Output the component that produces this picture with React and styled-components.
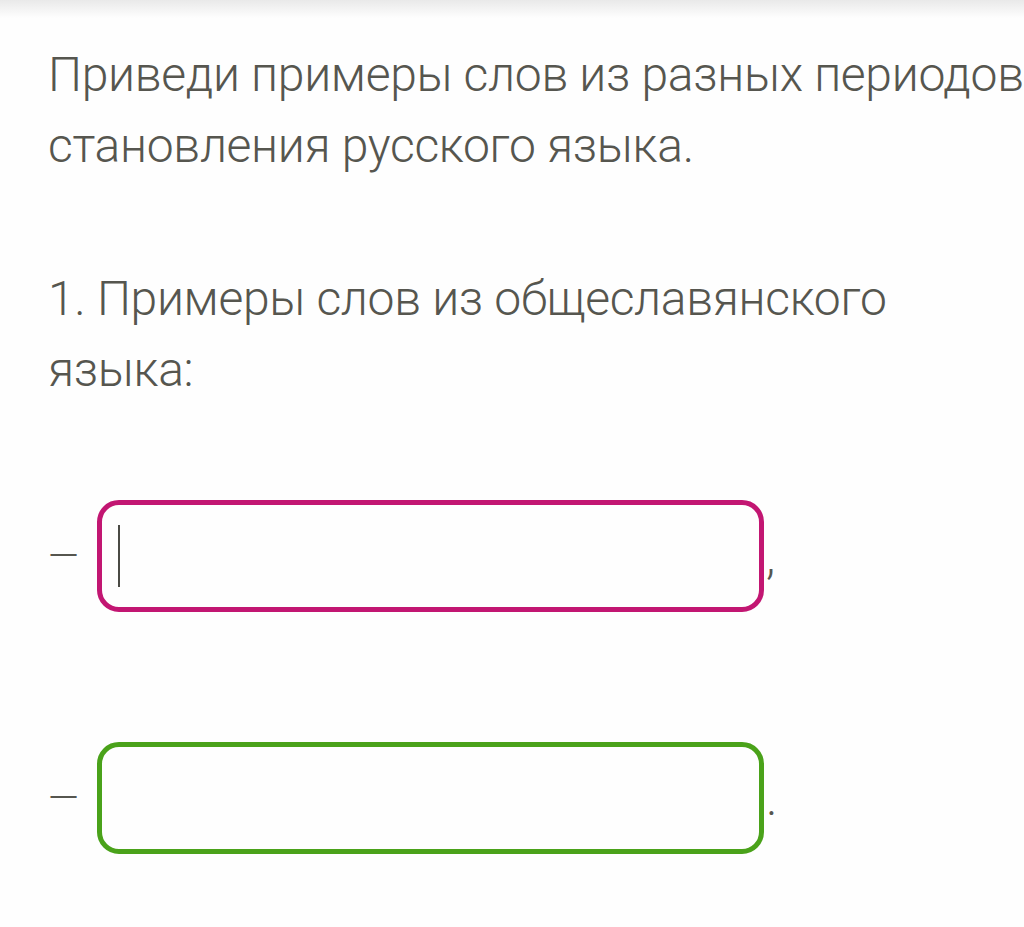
import React from "react";
import styled, { createGlobalStyle } from "styled-components";

const GlobalStyle = createGlobalStyle`
  html, body {
    margin: 0;
    padding: 0;
    background: #fefefe;
  }
  body {
    font-family: Roboto, "Noto Sans", "Liberation Sans", sans-serif;
    overflow: hidden;
  }
`;

const Page = styled.div`
  width: 1024px;
  height: 927px;
  overflow: hidden;
  background: #fefefe;
`;

const TopShadow = styled.div`
  height: 18px;
  background: linear-gradient(to bottom, #e9e9e9, #fefefe);
`;

const Content = styled.div`
  padding: 21px 0 0 48px;
  color: #56564f;
  font-weight: 300;
  font-size: 48px;
  line-height: 71px;
`;

const Paragraph = styled.p`
  margin: 0 0 ${p => p.$gap}px;
  white-space: nowrap;
  letter-spacing: ${p => p.$tight}px;
`;

const Row = styled.div`
  display: flex;
  align-items: center;
  height: 112px;
  margin-bottom: ${p => p.$gap}px;
  line-height: normal;
`;

const Dash = styled.span`
  width: 49px;
  flex: none;
  font-size: 40px;
`;

const Blank = styled.div`
  box-sizing: border-box;
  width: 667px;
  height: 112px;
  border: 5px solid ${p => p.$color};
  border-radius: 22px;
  display: flex;
  align-items: center;
  padding-left: 16px;
  flex: none;
`;

const Caret = styled.span`
  width: 2px;
  height: 62px;
  background: #4a4a44;
`;

const Punct = styled.span`
  margin-left: 2px;
`;

export default function App() {
  return (
    <Page>
      <GlobalStyle />
      <TopShadow />
      <Content>
        <Paragraph $gap={82} $tight={-0.3}>
          Приведи примеры слов из разных периодов
          <br />
          становления русского языка.
        </Paragraph>
        <Paragraph $gap={95} $tight={-0.3}>
          1. Примеры слов из общеславянского
          <br />
          языка:
        </Paragraph>
        <Row $gap={130}>
          <Dash>—</Dash>
          <Blank $color="#c21672">
            <Caret />
          </Blank>
          <Punct>,</Punct>
        </Row>
        <Row $gap={0}>
          <Dash>—</Dash>
          <Blank $color="#4aa21a" />
          <Punct>.</Punct>
        </Row>
      </Content>
    </Page>
  );
}
